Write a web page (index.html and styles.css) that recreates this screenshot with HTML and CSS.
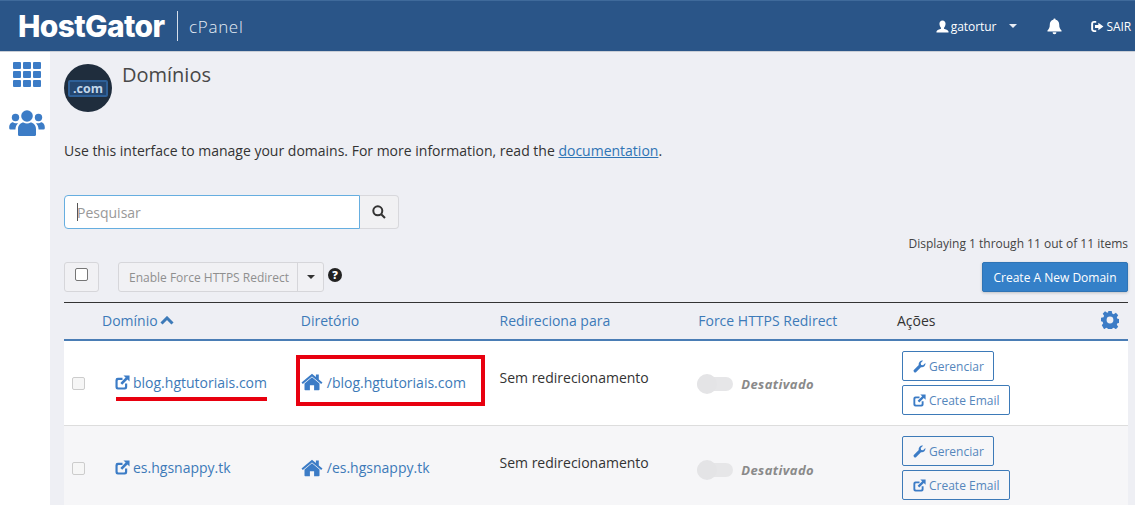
FILE: index.html
```html
<!DOCTYPE html>
<html lang="pt">
<head>
<meta charset="utf-8">
<title>Domínios</title>
<link rel="stylesheet" href="styles.css">
</head>
<body>
<svg class="defs" width="0" height="0" aria-hidden="true">
  <symbol id="i-ext" viewBox="0 0 16 16"><path d="M13 9v4a2.500 2.500 0 0 1-2.500 2.500H3A2.500 2.500 0 0 1 .5 13V5.500A2.500 2.500 0 0 1 3 3h5v2.300H3.800a1 1 0 0 0-1 1v5.900a1 1 0 0 0 1 1h5.900a1 1 0 0 0 1-1V9z"/><path d="M9 .5h6.500V7l-2.200-2.200-5.600 5.600-2-2 5.600-5.700z"/></symbol>
  <symbol id="i-home" viewBox="0 0 22 18"><path d="M11 4.200 3.500 10.400v6a.8.800 0 0 0 .8.8h4.600v-5h4.200v5h4.600a.8.800 0 0 0 .8-.8v-6z"/><path d="M11 .8 0.500 9.500l1.300 1.500L11 3.400l9.200 7.600 1.300-1.500-3.700-3V1.500h-2.900v2.600z"/></symbol>
  <symbol id="i-wrench" viewBox="0 0 16 16"><path d="M15.200 3.700c.3 1.500-.1 3-1.200 4.100-1.100 1.100-2.700 1.500-4.200 1.100L4 14.700a1.900 1.900 0 0 1-2.700-2.700l5.800-5.800C6.700 4.700 7.100 3.100 8.200 2 9.300.9 10.800.5 12.300.800L9.500 3.600l.5 2.400 2.400.5z"/></symbol>
  <symbol id="i-user" viewBox="0 0 14 14"><path d="M7 .5c2 0 3.300 1.500 3.300 3.500S9.200 8 8.600 8.400v1c1.800.6 4.400 1 4.900 3.100v1H.5v-1C1 10.400 3.600 10 5.400 9.400v-1C4.800 8 3.700 6 3.700 4S5 .5 7 .5z"/></symbol>
</svg>

<header class="topbar">
  <div class="brand">
    <span class="brand-name">HostGator</span>
    <span class="brand-sep"></span>
    <span class="brand-product">cPanel</span>
  </div>
  <nav class="top-actions">
    <span class="top-user"><svg class="ico-user"><use href="#i-user"/></svg>gatortur<span class="caret caret-white"></span></span>
    <svg class="ico-bell" viewBox="0 0 16 17"><path d="M8 0a1.200 1.200 0 0 1 1.200 1.300C11.700 1.800 13 3.800 13 6.200c0 4 1.200 5.300 2.500 6.600v.9H.5v-.9C1.800 11.500 3 10.200 3 6.200c0-2.400 1.300-4.400 3.800-4.900A1.200 1.200 0 0 1 8 0z"/><path d="M6 14.600h4A2 2 0 0 1 8 16.800a2 2 0 0 1-2-2.200z"/></svg>
    <span class="top-logout"><svg class="ico-logout" viewBox="0 0 15 13"><path d="M6 0v2.200H3.600c-.8 0-1.300.5-1.300 1.300v6c0 .8.500 1.300 1.300 1.300H6V13H3.400C1.400 13 0 11.600 0 9.600V3.400C0 1.400 1.400 0 3.400 0z"/><path d="M8.500 2 14.500 6.500 8.500 11V8.300H4.500V4.700h4z"/></svg>SAIR</span>
  </nav>
</header>

<div class="shell">
  <aside class="sidebar">
    <div class="apps">
      <i></i><i></i><i></i><i></i><i></i><i></i><i></i><i></i><i></i>
    </div>
    <svg class="ico-users" viewBox="0 0 36 26"><circle cx="18" cy="6" r="5.800"/><circle cx="6.500" cy="7.500" r="3.700"/><circle cx="29.500" cy="7.500" r="3.700"/><path d="M9 25v-6c0-4 3-6.500 5.500-6.500 1 .7 2.200 1 3.500 1s2.500-.3 3.500-1C24 12.500 27 15 27 19v6a1.500 1.500 0 0 1-1.500 1h-15A1.500 1.500 0 0 1 9 25z"/><path d="M.2 17.500c0-3 1.800-5.200 3.800-5.200.8.600 1.600.9 2.500.9h2.600C7.500 14.500 6.600 16.800 6.400 19.500H1.500A1.300 1.300 0 0 1 .2 18.300z"/><path d="M35.800 17.500c0-3-1.800-5.200-3.800-5.200-.8.600-1.600.9-2.500.9h-2.600c1.600 1.300 2.500 3.600 2.700 6.300h4.900a1.300 1.300 0 0 0 1.300-1.200z"/></svg>
  </aside>

  <main class="content">
    <div class="page-head">
      <div class="page-logo"><span class="page-logo-box">.com</span></div>
      <h1 class="page-title">Domínios</h1>
    </div>
    <p class="intro">Use this interface to manage your domains. For more information, read the <a href="#">documentation</a>.</p>

    <div class="search">
      <div class="search-input"><span class="search-cursor"></span>Pesquisar</div>
      <div class="search-btn"><svg class="ico-search" viewBox="0 0 14 14"><circle cx="5.800" cy="5.800" r="4.500"/><path d="M9.200 9.200 13 13"/></svg></div>
    </div>

    <div class="count">Displaying 1 through 11 out of 11 items</div>

    <div class="toolbar">
      <div class="toolbar-left">
        <div class="check-wrap"><span class="checkbox"></span></div>
        <div class="split">
          <span class="split-main">Enable Force HTTPS Redirect</span>
          <span class="split-caret"><span class="caret caret-dark"></span></span>
        </div>
        <span class="help">?</span>
      </div>
      <button class="primary" type="button">Create A New Domain</button>
    </div>

    <div class="table">
      <div class="row head">
        <div></div>
        <div class="th link">Domínio<svg class="ico-chev" viewBox="0 0 14 9"><path d="M1.500 7.500 7 2l5.500 5.500"/></svg></div>
        <div class="th link">Diretório</div>
        <div class="th link">Redireciona para</div>
        <div class="th link">Force HTTPS Redirect</div>
        <div class="th th-actions">Ações<svg class="ico-gear" viewBox="0 0 18 18"><path fill-rule="evenodd" d="M7.300 0h3.400l.5 2.500 1.500.7 2.200-1.400 2.300 2.400-1.400 2.100.6 1.500 2.500.5v3.400l-2.500.5-.6 1.500 1.400 2.100-2.300 2.400-2.200-1.400-1.500.7-.5 2.400H7.300l-.5-2.400-1.500-.7-2.200 1.400L.8 14.300l1.400-2.100-.6-1.500L0 10.200V6.800l2.500-.5.600-1.500L1.700 2.700 4 .3l2.200 1.400 1-.4zM9 5.600a3 3 0 1 0 0 6.800 3 3 0 0 0 0-6.800z"/></svg></div>
      </div>

      <div class="row body">
        <div class="cell"><span class="checkbox dim"></span></div>
        <div class="cell link domain marked"><svg class="ico-ext"><use href="#i-ext"/></svg>blog.hgtutoriais.com</div>
        <div class="cell link dir boxed"><svg class="ico-home"><use href="#i-home"/></svg>/blog.hgtutoriais.com</div>
        <div class="cell redirect">Sem redirecionamento</div>
        <div class="cell toggle"><span class="switch"><span class="knob"></span></span><em>Desativado</em></div>
        <div class="cell actions">
          <button class="outline" type="button"><svg class="ico-btn"><use href="#i-wrench"/></svg>Gerenciar</button>
          <button class="outline" type="button"><svg class="ico-btn"><use href="#i-ext"/></svg>Create Email</button>
        </div>
      </div>

      <div class="row body alt">
        <div class="cell"><span class="checkbox dim"></span></div>
        <div class="cell link domain"><svg class="ico-ext"><use href="#i-ext"/></svg>es.hgsnappy.tk</div>
        <div class="cell link dir"><svg class="ico-home"><use href="#i-home"/></svg>/es.hgsnappy.tk</div>
        <div class="cell redirect">Sem redirecionamento</div>
        <div class="cell toggle"><span class="switch"><span class="knob"></span></span><em>Desativado</em></div>
        <div class="cell actions">
          <button class="outline" type="button"><svg class="ico-btn"><use href="#i-wrench"/></svg>Gerenciar</button>
          <button class="outline" type="button"><svg class="ico-btn"><use href="#i-ext"/></svg>Create Email</button>
        </div>
      </div>
    </div>
  </main>
</div>
</body>
</html>
```

FILE: styles.css
```css
*, *::after { box-sizing: border-box; }
html, body { height: 505px; overflow: hidden; }
body { margin: 0; background: #eeeff4; font-family: "Open Sans", sans-serif; color: #333; font-size: 14px; }
.defs { position: absolute; }
a { color: #2f74b5; }

.topbar { height: 52px; background: #2a5588; border-top: 1px solid #3f6a9b; border-bottom: 1px solid #c9ced6; display: flex; justify-content: space-between; align-items: center; color: #fff; }
.brand { display: flex; align-items: center; padding-left: 18px; }
.brand-name { font-family: Inter, sans-serif; font-weight: 800; font-size: 30px; letter-spacing: -0.65px; width: 148px; white-space: nowrap; }
.brand-sep { width: 1px; height: 30px; background: #d5deea; margin: 0 11px 0 11px; }
.brand-product { font-size: 17px; font-weight: 300; color: #e6edf5; letter-spacing: .7px; }
.top-actions { display: flex; align-items: center; font-size: 12px; }
.top-user { display: flex; align-items: center; font-weight: 400; letter-spacing: -.05px; }
.ico-user { width: 13px; height: 13px; fill: #fff; margin-right: 2px; }
.caret { display: inline-block; width: 0; height: 0; border-left: 4px solid transparent; border-right: 4px solid transparent; }
.caret-white { border-top: 4px solid #e9eef5; margin-left: 13px; }
.caret-dark { border-top: 4px solid #333; }
.ico-bell { width: 15px; height: 17px; fill: #fff; margin-left: 30px; }
.top-logout { display: flex; align-items: center; margin-left: 29px; margin-right: 4px; font-weight: 400; font-size: 12px; letter-spacing: -.1px; }
.ico-logout { width: 13px; height: 11px; fill: #fff; margin-right: 2px; }

.shell { display: flex; height: 453px; }
.sidebar { width: 50px; background: #fff; display: flex; flex-direction: column; align-items: center; padding-top: 10px; flex: none; }
.apps { display: grid; grid-template-columns: repeat(3, 8px); grid-auto-rows: 7px; gap: 2px; margin-left: 3px; }
.apps i { background: #3c7cc6; border-radius: 1px; }
.ico-users { width: 36px; height: 26px; fill: #3c7cc6; margin-top: 23px; margin-left: 3px; }

.content { flex: 1; padding: 12px 7px 0 14px; min-width: 0; }
.page-head { display: flex; height: 48px; }
.page-logo { width: 48px; height: 48px; border-radius: 50%; background: #1f2d3d; display: flex; align-items: center; justify-content: center; }
.page-logo-box { width: 40px; height: 17px; border: 2px solid #2e6098; border-radius: 2px; background: #24466f; color: #c2d6ea; font-size: 12.500px; font-weight: 700; line-height: 13px; text-align: center; }
.page-title { margin: -1px 0 0 10px; font-size: 20px; font-weight: 400; line-height: 24px; color: #484848; }
.intro { margin: 28px 0 0; font-size: 14px; line-height: 22px; color: #333; }
.intro a { color: #2f74b5; }

.search { display: flex; margin-top: 33px; width: 335px; height: 34px; }
.search-input { flex: 1; background: #fff; border: 1px solid #66aee0; border-radius: 4px 0 0 4px; display: flex; align-items: center; padding-left: 12px; color: #999; font-size: 14px; }
.search-cursor { width: 1px; height: 18px; background: #555; margin-right: -1px; }
.search-btn { width: 39px; background: #f1f1f3; border: 1px solid #d8d8dc; border-left: 0; border-radius: 0 4px 4px 0; display: flex; align-items: center; justify-content: center; }
.ico-search { width: 14px; height: 14px; fill: none; stroke: #333; stroke-width: 2; }

.count { text-align: right; font-size: 12px; line-height: 16px; color: #444; margin-top: 7px; }
.toolbar { display: flex; justify-content: space-between; align-items: flex-end; margin-top: 10px; }
.toolbar-left { display: flex; align-items: flex-start; align-self: flex-start; margin-top: 0; }
.check-wrap { width: 35px; height: 30px; border: 1px solid #d6d6da; border-radius: 3px; background: #f1f1f4; display: flex; align-items: center; justify-content: center; padding: 0 1px 5px 0; }
.checkbox { display: block; width: 13px; height: 13px; background: #fff; border: 1px solid #767676; border-radius: 2px; }
.checkbox.dim { border-color: #ccc; background: #f6f6f6; }
.split { display: flex; height: 30px; margin-left: 19px; border: 1px solid #d6d6da; border-radius: 3px; background: #f1f1f4; font-size: 12px; color: #8f8f8f; align-items: stretch; }
.split-main { width: 179px; display: flex; align-items: center; justify-content: center; border-right: 1px solid #d6d6da; white-space: nowrap; padding-left: 2px; }
.split-caret { width: 25px; display: flex; align-items: center; justify-content: center; }
.help { width: 14px; height: 14px; border-radius: 50%; background: #222; color: #fff; font-size: 11px; font-weight: 800; line-height: 14px; text-align: center; margin: 6px 0 0 4px; }
.primary { width: 146px; height: 30px; background: #3480c8; color: #fff; border: 1px solid #2f74b5; border-radius: 2px; font: 12px "Open Sans", sans-serif; box-shadow: 0 1px 3px rgba(0,0,0,.2); padding: 0; }

.table { margin-top: 10px; border-top: 1px solid #333; }
.row { display: grid; grid-template-columns: 38px 198.750px 198.750px 198.750px 198.750px 230px; }
.head { height: 38px; border-bottom: 2px solid #4a7db5; }
.th { display: flex; align-items: center; font-size: 14px; white-space: pre; padding-bottom: 1px; }
.th.link { color: #3d7ab8; }
.ico-chev { width: 14px; height: 9px; fill: none; stroke: #3d7ab8; stroke-width: 3; margin-left: 2px; }
.th-actions { color: #333; position: relative; }
.ico-gear { width: 18px; height: 18px; fill: #3c7cc6; position: absolute; right: 8px; top: 8px; }

.body { height: 85px; background: #fff; border-bottom: 1px solid #ddd; }
.alt { background: #f6f6f8; border-bottom: 0; }
.cell { display: flex; align-items: center; position: relative; font-size: 14px; white-space: nowrap; }
.cell:first-child { padding-left: 8px; }
.link { color: #3d7ab8; }
.domain { padding: 0 0 2px 13px; }
.ico-ext { width: 15px; height: 15px; fill: #3c7cc6; margin-right: 3px; }
.ico-home { width: 22px; height: 18px; fill: #3c7cc6; margin-right: 4px; }
.dir { padding-bottom: 2px; }
.redirect { color: #333; padding-bottom: 12px; }
.toggle { padding-top: 2px; margin-left: -1px; }
.switch { width: 36px; height: 14px; border-radius: 7px; background: #e6e6e8; position: relative; display: block; flex: none; }
.knob { position: absolute; left: 0; top: -3px; width: 20px; height: 20px; border-radius: 50%; background: #e4e4e6; }
.toggle em { font-size: 13px; font-weight: 700; color: #8a8a8a; margin-left: 8px; letter-spacing: .4px; }
.actions { flex-direction: column; align-items: flex-start; justify-content: flex-start; padding: 10px 0 0 5px; gap: 4px; }
.outline { height: 30px; padding: 0 9px 0 10px; background: transparent; border: 1px solid #3d7ab8; border-radius: 2px; color: #5586bc; font: 12px "Open Sans", sans-serif; display: flex; align-items: center; }
.ico-btn { width: 13px; height: 13px; fill: #3c7cc6; margin-right: 3px; }

.marked::after { content: ""; position: absolute; left: 14px; width: 151px; top: 56px; height: 4px; background: #e8000f; }
.boxed::after { content: ""; position: absolute; left: -5px; top: 14px; width: 189px; height: 51px; border: 4px solid #e8000f; }
```
